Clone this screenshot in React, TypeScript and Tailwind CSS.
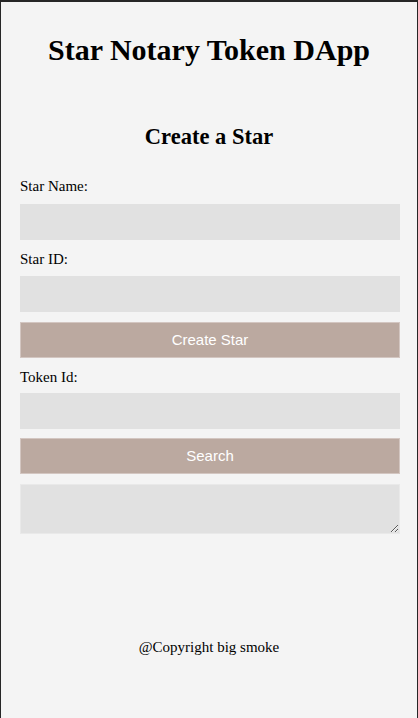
import { useState } from "react";

export default function App() {
  const [name, setName] = useState("");
  const [starId, setStarId] = useState("");
  const [tokenId, setTokenId] = useState("");

  return (
    <div className="min-h-[718px] border-x border-t-2 border-[#262626] bg-[#f4f4f4] font-['Liberation_Serif',serif] text-black">
      <h1 className="pt-[29px] text-center text-[30px] font-bold leading-[37px]">Star Notary Token DApp</h1>
      <h2 className="mt-[54px] text-center text-[22.5px] font-bold leading-[29px]">Create a Star</h2>

      <div className="ml-[19px] flex w-[380px] flex-col">
        <label className="mt-[26px] text-[15px] leading-[18px]">Star Name:</label>
        <input
          value={name}
          onChange={(e) => setName(e.target.value)}
          className="mt-[9px] h-[36px] w-full bg-[#e1e1e1] px-2 outline-none"
        />
        <label className="mt-[10px] text-[15px] leading-[18px]">Star ID:</label>
        <input
          value={starId}
          onChange={(e) => setStarId(e.target.value)}
          className="mt-[8px] h-[36px] w-full bg-[#e1e1e1] px-2 outline-none"
        />
        <button
          type="button"
          className="mt-[10px] h-[36px] w-full border border-[#d3c6c1] bg-[#bba9a0] font-['Liberation_Sans',sans-serif] text-[15px] text-white"
        >
          Create Star
        </button>
        <label className="mt-[10px] text-[15px] leading-[18px]">Token Id:</label>
        <input
          value={tokenId}
          onChange={(e) => setTokenId(e.target.value)}
          className="mt-[7px] h-[36px] w-full bg-[#e1e1e1] px-2 outline-none"
        />
        <button
          type="button"
          className="mt-[9px] h-[36px] w-full border border-[#d3c6c1] bg-[#bba9a0] font-['Liberation_Sans',sans-serif] text-[15px] text-white"
        >
          Search
        </button>
        <textarea className="mt-[10px] h-[50px] w-full border border-[#e9e9e9] bg-[#e1e1e1] outline-none" />
      </div>

      <p className="mt-[104px] text-center text-[15px] leading-[18px]">@Copyright big smoke</p>
    </div>
  );
}
